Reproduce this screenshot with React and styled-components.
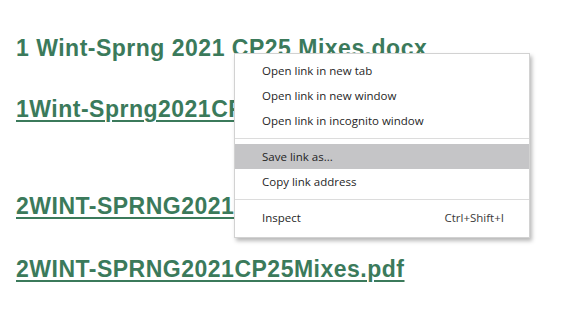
import React from 'react'
import styled, {createGlobalStyle} from 'styled-components'

const GlobalStyle = createGlobalStyle`
html, body {
    margin: 0;
    padding: 0;
    background: #fff;
}
body {
    width: 563px;
    height: 311px;
    overflow: hidden;
}
`

const Page = styled.main`
position: relative;
display: flex;
flex-direction: column;
align-items: flex-start;
padding: 0 16px;
height: 311px;
box-sizing: border-box;
`

const Title = styled.div`
margin-top: ${props => props.top}px;
font-family: "Liberation Sans", Arial, sans-serif;
font-weight: bold;
font-size: 23px;
letter-spacing: 0.5px;
line-height: 26px;
color: #3b7a5b;
white-space: nowrap;
`

const FileLink = styled.a`
margin-top: ${props => props.top}px;
font-family: "Liberation Sans", Arial, sans-serif;
font-weight: bold;
font-size: 23px;
letter-spacing: 0.5px;
line-height: 26px;
color: #3b7a5b;
text-decoration: underline;
text-decoration-thickness: 2px;
text-underline-offset: 3px;
white-space: nowrap;
`

const Menu = styled.ul`
position: absolute;
left: 234px;
top: 53px;
width: 296px;
margin: 0;
padding: 4px 0 7px;
list-style: none;
background: #fff;
border: 1px solid #d2d2d2;
box-sizing: border-box;
box-shadow: 2px 3px 4px rgba(0, 0, 0, 0.28);
font-family: "Open Sans", "Noto Sans", sans-serif;
font-size: 11.5px;
color: #1f1f1f;
`

const Item = styled.li`
display: flex;
justify-content: space-between;
align-items: center;
height: 25px;
padding: 0 25px 0 27px;
background: ${props => props.active ? '#c5c5c7' : 'transparent'};
`

const Shortcut = styled.span`
color: #3a3a3a;
`

const Separator = styled.li`
height: 11px;
display: flex;
align-items: center;
&::before {
    content: '';
    flex: 1;
    height: 1px;
    background: #dcdcdc;
}
`

export default function App() {
    return (
        <>
            <GlobalStyle />
            <Page>
                <Title top={35}>1 Wint-Sprng 2021 CP25 Mixes.docx</Title>
                <FileLink top={35} href="#">1Wint-Sprng2021CP25Mixes.pdf</FileLink>
                <FileLink top={71} href="#">2WINT-SPRNG2021CP25Mixes.docx</FileLink>
                <FileLink top={37} href="#">2WINT-SPRNG2021CP25Mixes.pdf</FileLink>
                <Menu>
                    <Item>Open link in new tab</Item>
                    <Item>Open link in new window</Item>
                    <Item>Open link in incognito window</Item>
                    <Separator />
                    <Item active>Save link as...</Item>
                    <Item>Copy link address</Item>
                    <Separator />
                    <Item>
                        <span>Inspect</span>
                        <Shortcut>Ctrl+Shift+I</Shortcut>
                    </Item>
                </Menu>
            </Page>
        </>
    )
}
